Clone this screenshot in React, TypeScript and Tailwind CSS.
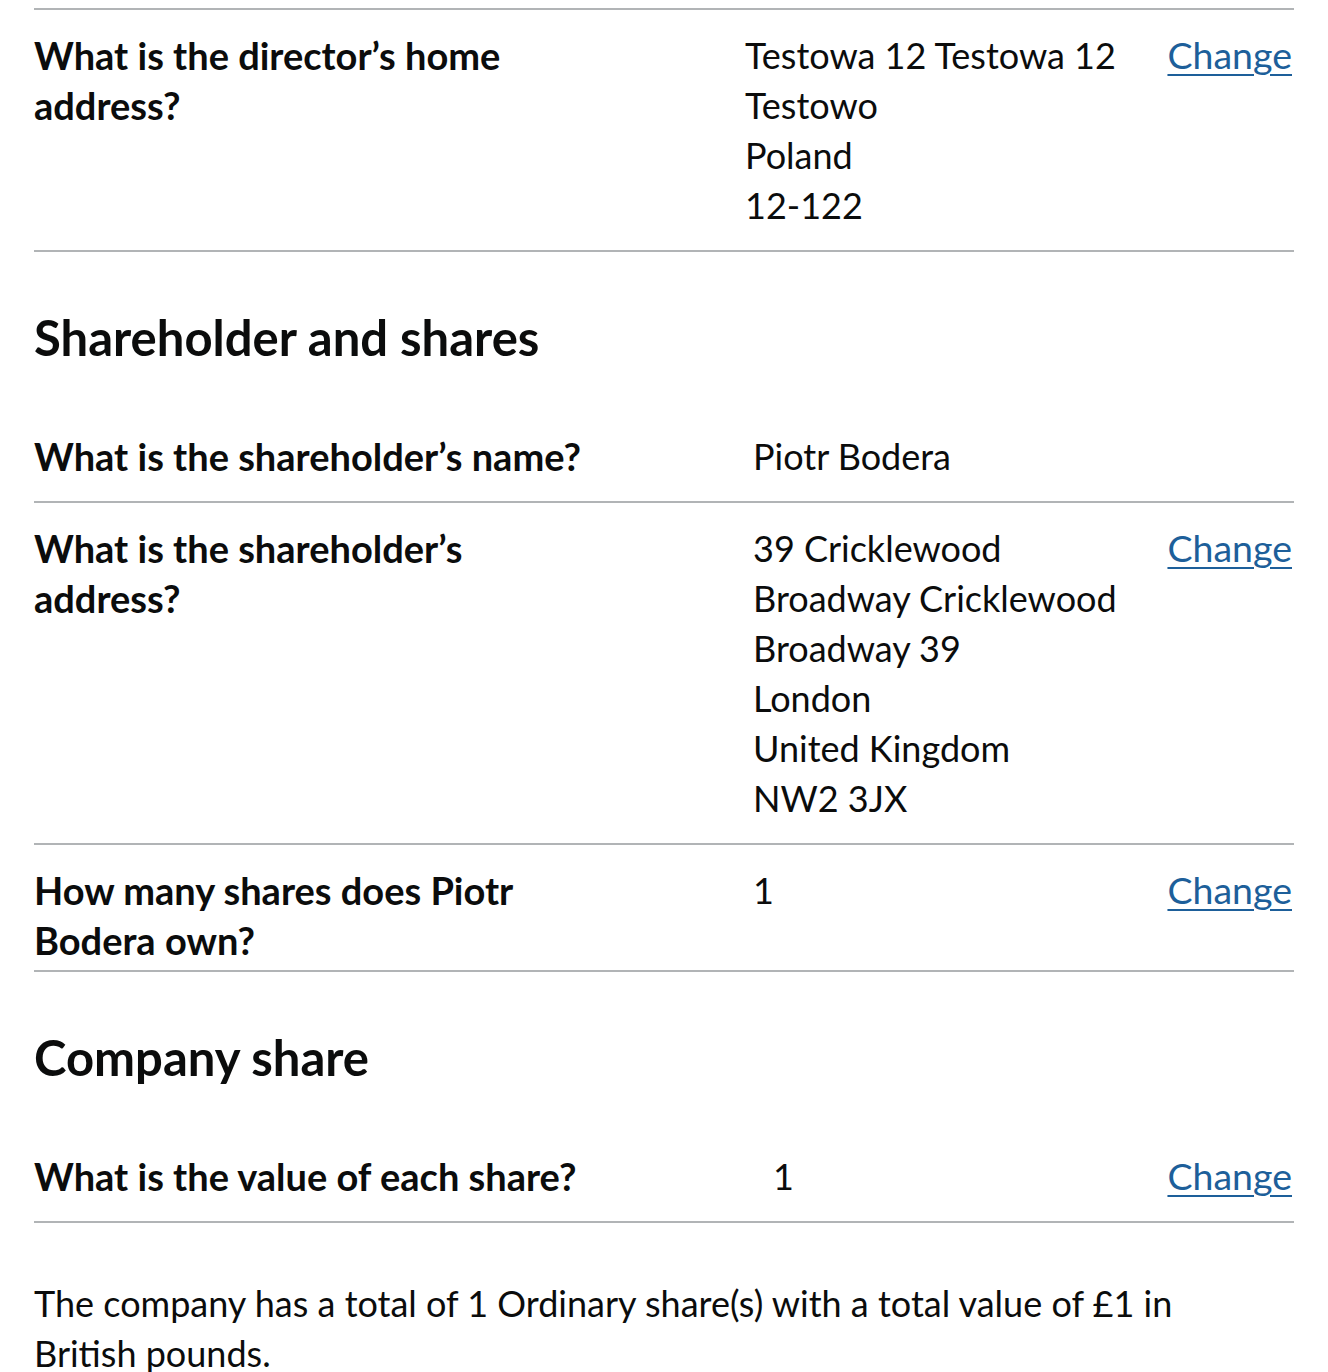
import React from "react";

type Row = {
  key: string;
  value: string[];
  change?: boolean;
};

function SummaryList({ rows, keyCol, first }: { rows: Row[]; keyCol: string; first?: boolean }) {
  return (
    <dl className={first ? "border-t-2 border-[#b1b4b6]" : ""}>
      {rows.map((r) => (
        <div key={r.key} className={`grid ${keyCol} border-b-2 border-[#b1b4b6]`}>
          <dt className="pt-[20px] pb-[5px] max-w-[580px] text-[38px] leading-[50px] font-bold">{r.key}</dt>
          <dd className="pt-[20px] pb-[20px] text-[36px] leading-[50px]">
            {r.value.map((v, i) => (
              <div key={i}>{v}</div>
            ))}
          </dd>
          <dd className="pt-[20px] pb-[20px] pr-[2px] text-right text-[37.5px] leading-[50px]">
            {r.change ? (
              <a href="#" className="text-[#1d5f9a] underline decoration-2 underline-offset-[5px]">
                Change
              </a>
            ) : null}
          </dd>
        </div>
      ))}
    </dl>
  );
}

export default function App() {
  return (
    <div className="bg-white min-h-[1372px] px-[34px] pt-[8px] text-[#0b0c0c] font-['Lato',sans-serif]">
      <SummaryList
        first
        keyCol="grid-cols-[711px_1fr_auto]"
        rows={[
          {
            key: "What is the director\u2019s home address?",
            value: ["Testowa 12 Testowa 12", "Testowo", "Poland", "12-122"],
            change: true,
          },
        ]}
      />

      <h2 className="mt-[60px] mb-[49px] text-[49px] leading-[50px] font-bold">Shareholder and shares</h2>

      <SummaryList
        keyCol="grid-cols-[719px_1fr_auto]"
        rows={[
          { key: "What is the shareholder\u2019s name?", value: ["Piotr Bodera"] },
          {
            key: "What is the shareholder\u2019s address?",
            value: ["39 Cricklewood", "Broadway Cricklewood", "Broadway 39", "London", "United Kingdom", "NW2 3JX"],
            change: true,
          },
          { key: "How many shares does Piotr Bodera own?", value: ["1"], change: true },
        ]}
      />

      <h2 className="mt-[60px] mb-[49px] text-[49px] leading-[50px] font-bold">Company share</h2>

      <SummaryList
        keyCol="grid-cols-[739px_1fr_auto]"
        rows={[{ key: "What is the value of each share?", value: ["1"], change: true }]}
      />

      <p className="mt-[55px] max-w-[1200px] text-[36px] leading-[50px]">
        The company has a total of 1 Ordinary share(s) with a total value of £1 in British pounds.
      </p>
    </div>
  );
}
